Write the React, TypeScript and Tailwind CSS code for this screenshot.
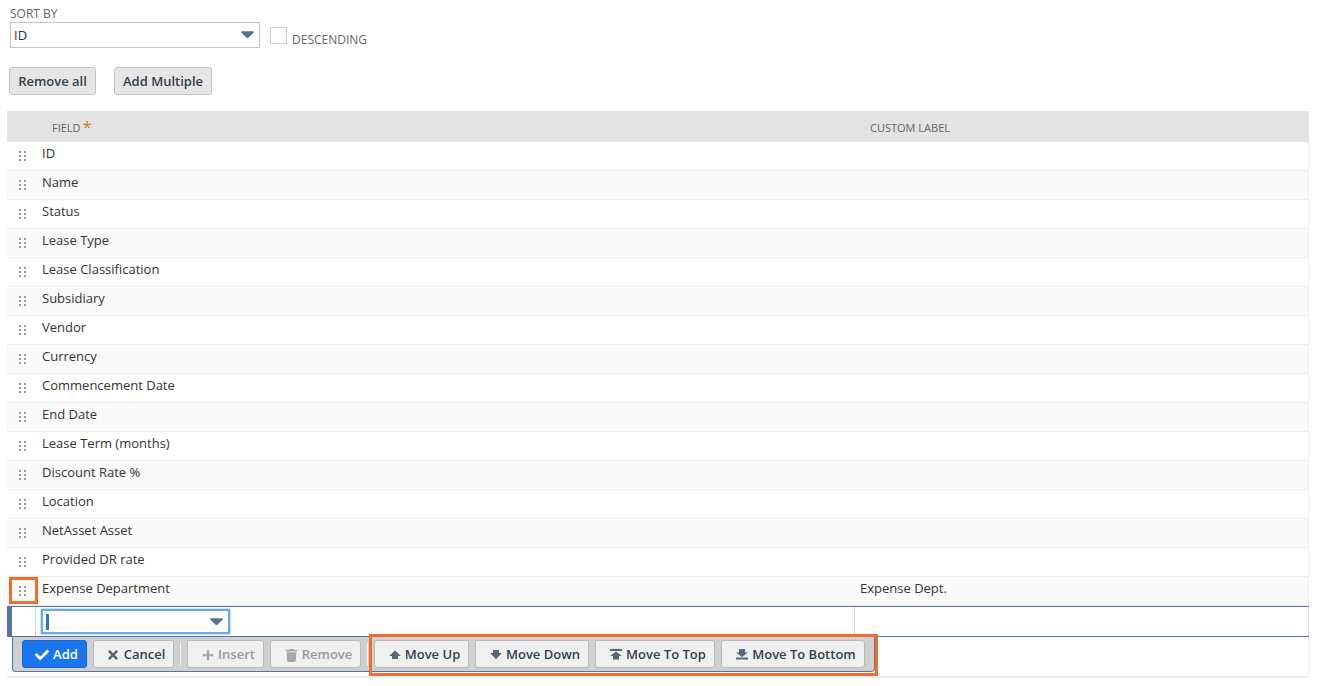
import { FaCheck, FaPlus, FaTimes, FaTrash } from "react-icons/fa";
import type { ReactNode } from "react";

const rows = [
  "ID",
  "Name",
  "Status",
  "Lease Type",
  "Lease Classification",
  "Subsidiary",
  "Vendor",
  "Currency",
  "Commencement Date",
  "End Date",
  "Lease Term (months)",
  "Discount Rate %",
  "Location",
  "NetAsset Asset",
  "Provided DR rate",
  "Expense Department",
];

function Caret() {
  return (
    <svg width="13" height="8" viewBox="0 0 14 8" className="shrink-0">
      <path d="M1 0H13Q14.500 0 13.500 1.500L8 7Q7 8 6 7L0.500 1.500Q-0.500 0 1 0Z" fill="#5a7197" />
    </svg>
  );
}

function Dots() {
  return (
    <svg width="7" height="10" viewBox="0 0 7 10" className="shrink-0">
      {[0, 4, 8].map((y) => (
        <g key={y} fill="#999999">
          <rect x="0" y={y} width="2" height="2" />
          <rect x="5" y={y} width="2" height="2" />
        </g>
      ))}
    </svg>
  );
}

function ArrowIcon({ kind }: { kind: "up" | "down" | "top" | "bottom" }) {
  const d = {
    up: "M3 10H9V7H12L6 1.500L0 7H3Z",
    down: "M3 1H9V4H12L6 10L0 4H3Z",
    top: "M0 0H12V2H0ZM6 2.500L12 7H9V10.500H3V7H0Z",
    bottom: "M3 0H9V3.500H12L6 8L0 3.500H3ZM0 8.500H12V10.500H0Z",
  }[kind];
  return (
    <svg width="12" height="12" viewBox="0 0 12 12" className="shrink-0">
      <path d={d} fill="#5a6579" />
    </svg>
  );
}

function ToolButton({
  icon,
  label,
  width,
  disabled,
}: {
  icon: ReactNode;
  label: string;
  width: string;
  disabled?: boolean;
}) {
  return (
    <button
      className={`flex h-[28px] items-center justify-center gap-[4px] rounded-[3px] border border-[#b9b9b9] bg-[#f0f0f0] pl-[6px] pt-[2px] text-[13px] font-semibold ${width} ${
        disabled ? "text-[#9a9a9a]" : "text-[#333f50]"
      }`}
    >
      {icon}
      {label}
    </button>
  );
}

export default function App() {
  return (
    <div className="relative h-[686px] w-[1325px] overflow-hidden bg-white font-['Open_Sans',sans-serif] text-[13px] text-[#333]">
      <div className="pl-[10px] pt-[6px]">
        <div className="h-[16px] text-[12px] leading-[15px] text-[#666]">SORT BY</div>
        <div className="flex">
          <div className="flex h-[26px] w-[250px] items-center justify-between border border-[#c4c4c4] pl-[3px] pr-[5px]">
            <span className="pt-[1px]">ID</span>
            <Caret />
          </div>
          <div className="ml-[10px] mt-[5px] size-[17px] border border-[#cfcfcf]" />
          <div className="ml-[5px] mt-[10px] text-[12px] leading-[15px] text-[#666]">DESCENDING</div>
        </div>
      </div>

      <div className="ml-[9px] mt-[19px] flex gap-[18px]">
        <button className="h-[28px] w-[87px] rounded-[3px] border border-[#c4c4c4] bg-[#e6e6e6] pt-[2px] text-[13px] font-semibold text-[#333f50]">
          Remove all
        </button>
        <button className="h-[28px] w-[98px] rounded-[3px] border border-[#c4c4c4] bg-[#e6e6e6] pt-[2px] text-[13px] font-semibold text-[#333f50]">
          Add Multiple
        </button>
      </div>

      <div className="ml-[7px] mt-[16px] w-[1302px]">
        <div className="flex h-[31px] items-center bg-[#e3e3e3] pt-[3px] text-[11px] text-[#666]">
          <div className="ml-[45px] flex w-[818px] items-center">
            FIELD
            <span className="mb-[4px] ml-[2px] text-[17px] leading-none text-[#c8862a]">*</span>
          </div>
          <div>CUSTOM LABEL</div>
        </div>

        {rows.map((row, i) => (
          <div
            key={row}
            className={`flex h-[29px] border-b border-r border-[#eeeeee] ${i % 2 === 0 ? "bg-white" : "bg-[#fafafa]"}`}
          >
            <div className="w-[35px] pl-[12px] pt-[9px]">
              <Dots />
            </div>
            <div className="w-[818px] pt-[2px] leading-[18px]">{row}</div>
            <div className="pt-[2px] leading-[18px]">{row === "Expense Department" ? "Expense Dept." : ""}</div>
          </div>
        ))}

        <div className="flex h-[31px] border-y border-[#5a73a3]">
          <div className="w-[5px] bg-[#5a73a3]" />
          <div className="w-[24px] border-r border-[#d6d6d6]" />
          <div className="w-[818px] pl-[5px] pt-[2px]">
            <div className="flex h-[25px] w-[189px] items-center justify-between border-2 border-[#6aa9ea] pl-[3px] pr-[5px] shadow-[0_0_2px_#6aa9ea]">
              <div className="h-[16px] w-[3px] bg-[#2f6fd6]" />
              <Caret />
            </div>
          </div>
          <div className="flex-1 border-x border-[#d6d6d6]" />
        </div>

        <div className="flex h-[41px] flex-col border-b-2 border-r border-[#eeeeee]">
          <div className="ml-[5px] flex h-[35px] w-[863px] items-start gap-[6px] rounded-b-[4px] border border-t-0 border-[#5a73a3] bg-[#d0d0d0] pl-[9px] pt-[3px]">
            <button className="flex h-[28px] w-[65px] items-center justify-center gap-[4px] rounded-[3px] border border-[#1268d8] bg-[#1b76ee] pl-[4px] pt-[2px] text-[13px] font-semibold text-white">
              <FaCheck className="size-[14px]" />
              Add
            </button>
            <ToolButton icon={<FaTimes className="size-[14px] text-[#5a6579]" />} label="Cancel" width="w-[81px] pr-[2px]" />
            <div className="mt-[3px] h-[22px] w-px bg-[#f2f2f2]" />
            <ToolButton disabled icon={<FaPlus className="size-[12px] text-[#a8a8a8]" />} label="Insert" width="w-[77px]" />
            <ToolButton disabled icon={<FaTrash className="size-[13px] text-[#a8a8a8]" />} label="Remove" width="w-[91px]" />
            <div className="mt-[3px] h-[22px] w-px bg-[#f2f2f2]" />
            <ToolButton icon={<ArrowIcon kind="up" />} label="Move Up" width="w-[95px]" />
            <ToolButton icon={<ArrowIcon kind="down" />} label="Move Down" width="w-[114px]" />
            <ToolButton icon={<ArrowIcon kind="top" />} label="Move To Top" width="w-[120px]" />
            <ToolButton icon={<ArrowIcon kind="bottom" />} label="Move To Bottom" width="w-[144px]" />
          </div>
        </div>
      </div>

      <div className="absolute left-[9px] top-[577px] h-[27px] w-[29px] border-[3px] border-[#f26b30]" />
      <div className="absolute left-[369px] top-[634px] h-[42px] w-[509px] border-[3px] border-[#f26b30]" />
    </div>
  );
}
